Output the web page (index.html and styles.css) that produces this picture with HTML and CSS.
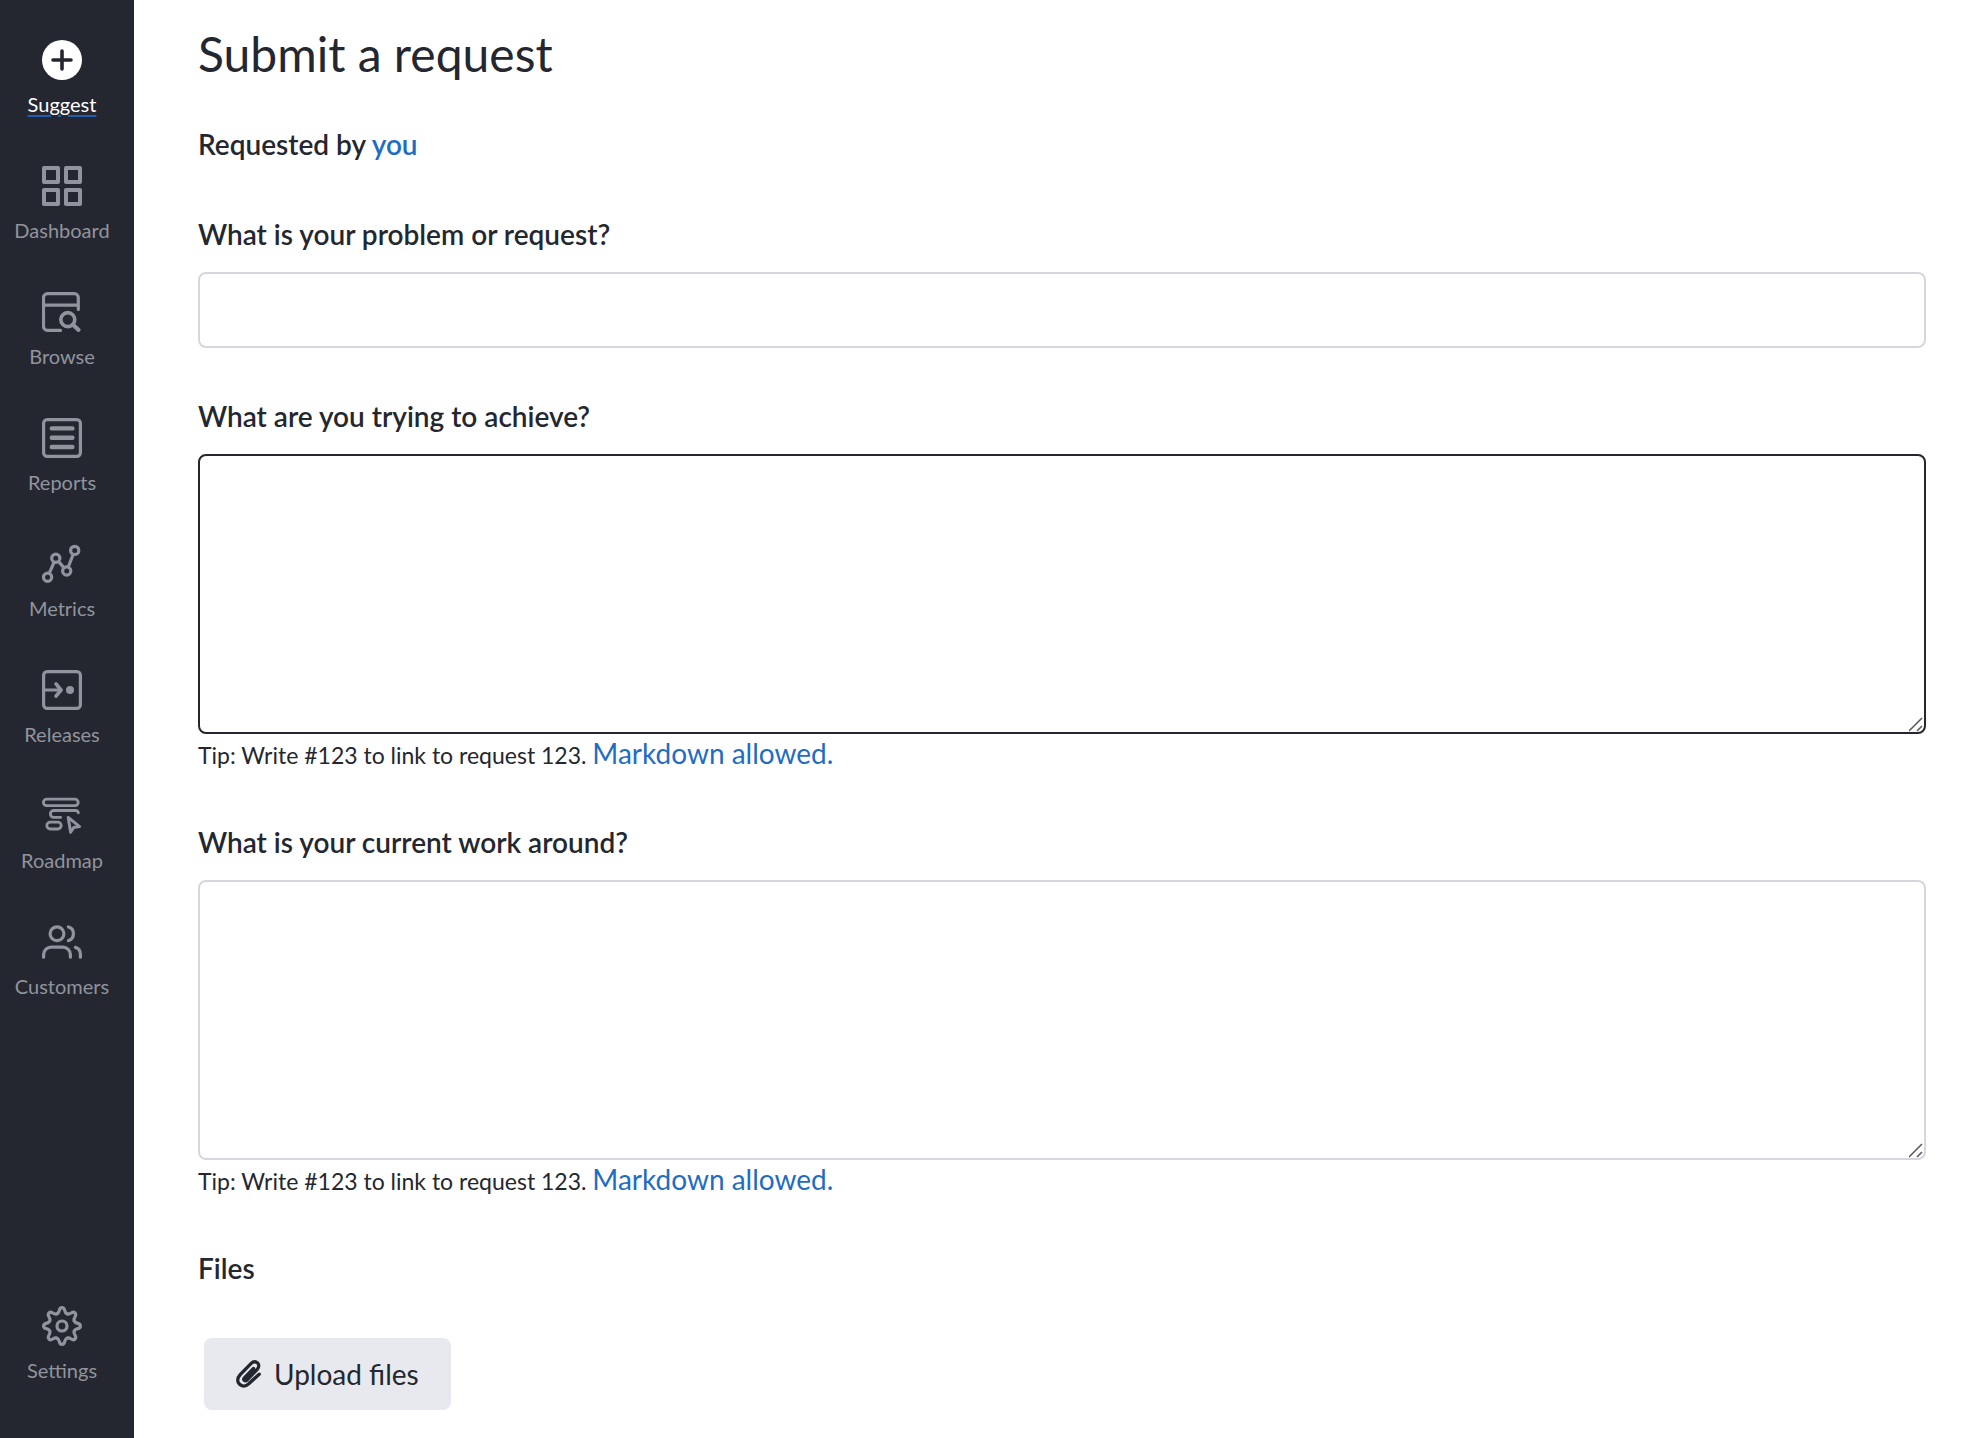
FILE: index.html
```html
<!DOCTYPE html>
<html lang="en">
  <head>
    <meta charset="UTF-8" />
    <meta name="viewport" content="width=device-width, initial-scale=1.0" />
    <title>Submit a request</title>
    <link rel="stylesheet" href="styles.css">
  </head>
  <body>
    <nav class="sidebar">
      <a class="nav-item active" href="#suggest">
        <svg class="nav-icon" viewBox="0 0 40 40" aria-hidden="true">
          <circle cx="20" cy="20" r="20" fill="#fff" stroke="none" />
          <path d="M20 11v18M11 20h18" stroke="#24272f" stroke-width="3.6" />
        </svg>
        <span class="nav-label">Suggest</span>
      </a>
      <a class="nav-item" href="#dashboard">
        <svg class="nav-icon thick" viewBox="0 0 40 40" aria-hidden="true">
          <rect x="2" y="2" width="14" height="14" />
          <rect x="24" y="2" width="14" height="14" />
          <rect x="2" y="24" width="14" height="14" />
          <rect x="24" y="24" width="14" height="14" />
        </svg>
        <span class="nav-label">Dashboard</span>
      </a>
      <a class="nav-item" href="#browse">
        <svg class="nav-icon" viewBox="0 0 40 40" aria-hidden="true">
          <path d="M18.5 38.4H5.5a4 4 0 0 1-4-4V5.6a4 4 0 0 1 4-4h26.8a4 4 0 0 1 4 4V17.5M1.5 13.2h34.8" />
          <circle cx="25.8" cy="27.6" r="7" stroke-width="3.6" />
          <path d="M31 32.8l5.4 5" stroke-width="4.2" />
        </svg>
        <span class="nav-label">Browse</span>
      </a>
      <a class="nav-item" href="#reports">
        <svg class="nav-icon" viewBox="0 0 40 40" aria-hidden="true">
          <rect x="1.6" y="1.6" width="36.8" height="36.8" rx="3.6" />
          <path d="M9.8 10.4h20.6M9.8 19.8h20.6M9.8 29h20.6" stroke-width="4.4" />
        </svg>
        <span class="nav-label">Reports</span>
      </a>
      <a class="nav-item" href="#metrics">
        <svg class="nav-icon" viewBox="0 0 40 40" aria-hidden="true">
          <circle cx="5.6" cy="33.2" r="4.1" />
          <circle cx="13.8" cy="14.3" r="4.1" />
          <circle cx="24.7" cy="27" r="4.1" />
          <circle cx="32.7" cy="6.4" r="4.1" />
          <path d="M7.2 29.4l5-11.4M16.5 17.4l5.5 6.5M26.2 23.2l5-13" stroke-linecap="butt" />
        </svg>
        <span class="nav-label">Metrics</span>
      </a>
      <a class="nav-item" href="#releases">
        <svg class="nav-icon" viewBox="0 0 40 40" aria-hidden="true">
          <rect x="1.6" y="1.6" width="36.8" height="36.8" rx="3.6" />
          <path d="M2 20h17" />
          <path d="M14 13.8l5 6.2-5 6.2" stroke-width="3.6" />
          <circle cx="28" cy="20" r="4" fill="#91949e" stroke="none" />
        </svg>
        <span class="nav-label">Releases</span>
      </a>
      <a class="nav-item" href="#roadmap">
        <svg class="nav-icon thin" viewBox="0 0 40 40" aria-hidden="true">
          <rect x="1.4" y="3.2" width="34.8" height="6.4" rx="3.2" />
          <path d="M36.4 16.8c-.4-1.6-1.4-2.3-3-2.3H11.8a3.4 3.4 0 0 0 0 6.9H18.6" />
          <rect x="4.8" y="26.2" width="14.4" height="6.8" rx="3.4" />
          <path d="M26.2 21.4l11.4 9.2-5.8.8-3.2 4.9z" stroke-width="3" />
        </svg>
        <span class="nav-label">Roadmap</span>
      </a>
      <a class="nav-item" href="#customers">
        <svg class="nav-icon" viewBox="0 0 40 40" aria-hidden="true">
          <circle cx="15" cy="11.8" r="6.9" />
          <path d="M1.6 35.2v-2.6a7.4 7.4 0 0 1 7.4-7.4h12a7.4 7.4 0 0 1 7.4 7.4v2.6" />
          <path d="M26.4 5c3.2.8 5 3.6 5 6.8s-1.8 6-5 6.8" />
          <path d="M33.4 25.4c3 .8 5 3.6 5 7v2.8" />
        </svg>
        <span class="nav-label">Customers</span>
      </a>
      <a class="nav-item nav-bottom" href="#settings">
        <svg class="nav-icon" viewBox="0 0 40 40" aria-hidden="true">
          <defs>
            <path id="tooth" d="M14.95 7.8C18.65 6.27 16 1.6 20 1.6S21.35 6.27 25.05 7.8" />
          </defs>
          <use href="#tooth" />
          <use href="#tooth" transform="rotate(45 20 20)" />
          <use href="#tooth" transform="rotate(90 20 20)" />
          <use href="#tooth" transform="rotate(135 20 20)" />
          <use href="#tooth" transform="rotate(180 20 20)" />
          <use href="#tooth" transform="rotate(225 20 20)" />
          <use href="#tooth" transform="rotate(270 20 20)" />
          <use href="#tooth" transform="rotate(315 20 20)" />
          <circle cx="20" cy="20" r="5" />
        </svg>
        <span class="nav-label">Settings</span>
      </a>
    </nav>

    <main class="content">
      <h1>Submit a request</h1>
      <form id="requestForm">
        <p class="requester">Requested by <a href="#you">you</a></p>

        <div class="field">
          <label for="problem">What is your problem or request?</label>
          <input type="text" id="problem" />
        </div>

        <div class="field">
          <label for="achieve">What are you trying to achieve?</label>
          <textarea id="achieve" class="current"></textarea>
          <p class="tip">Tip: Write #123 to link to request 123. <a href="#markdown">Markdown allowed.</a></p>
        </div>

        <div class="field">
          <label for="workaround">What is your current work around?</label>
          <textarea id="workaround"></textarea>
          <p class="tip">Tip: Write #123 to link to request 123. <a href="#markdown">Markdown allowed.</a></p>
        </div>

        <div class="field files">
          <h2>Files</h2>
          <button type="button" class="upload-btn">
            <svg class="clip" viewBox="0 0 26 30" aria-hidden="true">
              <path d="M17.5 9.5L8.4 18.8c-1.6 1.8.6 4 2.4 2.4L21.2 10.4c4.4-5-1.6-10.4-6-6L4.2 15.6c-6.8 7.6 2.2 15.4 8.8 9l10.2-9.4" />
            </svg>
            Upload files
          </button>
        </div>
      </form>
    </main>
  </body>
</html>
```

FILE: styles.css
```css
* {
  box-sizing: border-box;
}
body {
  display: flex;
  min-height: 100vh;
  margin: 0;
  background: #fff;
  color: #24272f;
  font-family: Lato, sans-serif;
  font-size: 28px;
  line-height: 40px;
}
a {
  color: #1f6dc2;
  text-decoration: none;
}
.sidebar {
  display: flex;
  flex-direction: column;
  flex: none;
  gap: 49px;
  width: 134px;
  padding: 40px 10px 55px 0;
  background: #24272f;
}
.nav-item {
  display: flex;
  flex-direction: column;
  align-items: center;
  gap: 11px;
  color: #91949e;
  font-size: 20px;
  line-height: 26px;
}
.nav-item.active .nav-label {
  color: #fff;
  text-decoration: underline #1f5fae 2px;
  text-underline-offset: 3px;
}
.nav-bottom {
  margin-top: auto;
}
.nav-icon {
  width: 40px;
  height: 40px;
  fill: none;
  stroke: #91949e;
  stroke-width: 3.2;
  stroke-linecap: round;
  stroke-linejoin: round;
}
.nav-icon.thick {
  stroke-width: 4;
}
.nav-icon.thin {
  stroke-width: 2.8;
}
.content {
  flex: 1;
  padding: 24px 60px 24px 64px;
}
h1 {
  margin: 0 0 40px;
  font-size: 48px;
  font-weight: 400;
  line-height: 60px;
}
.requester {
  margin: 0 0 50px;
  font-weight: 600;
}
.field {
  margin-bottom: 48px;
}
label {
  display: block;
  margin-bottom: 18px;
  font-weight: 600;
}
input,
textarea {
  display: block;
  width: 100%;
  padding: 16px;
  border: 2px solid #d5d7e0;
  border-radius: 8px;
  background: #fff;
  color: inherit;
  font: inherit;
}
input {
  height: 76px;
}
textarea {
  height: 280px;
  resize: vertical;
}
textarea.current,
input:focus,
textarea:focus {
  border-color: #24272f;
  outline: none;
}
textarea::-webkit-resizer {
  background: url("data:image/svg+xml,%3Csvg xmlns='http://www.w3.org/2000/svg' width='15' height='15'%3E%3Cpath d='M0 14L13 1M8 14l5-5' stroke='%23555' stroke-width='1.5'/%3E%3C/svg%3E") no-repeat;
}
.tip {
  margin: 0;
  font-size: 23px;
  line-height: 38px;
}
.tip a {
  font-size: 28px;
}
h2 {
  margin: 0 0 50px;
  font-size: 28px;
  font-weight: 600;
}
.files {
  margin-bottom: 0;
}
.upload-btn {
  display: flex;
  align-items: center;
  gap: 12px;
  height: 72px;
  margin-left: 6px;
  padding: 0 32px;
  border: none;
  border-radius: 8px;
  background: #e8e9ee;
  color: #24272f;
  font: inherit;
  cursor: pointer;
}
.clip {
  width: 26px;
  height: 30px;
  fill: none;
  stroke: #24272f;
  stroke-width: 3.4;
  stroke-linecap: round;
}
```
